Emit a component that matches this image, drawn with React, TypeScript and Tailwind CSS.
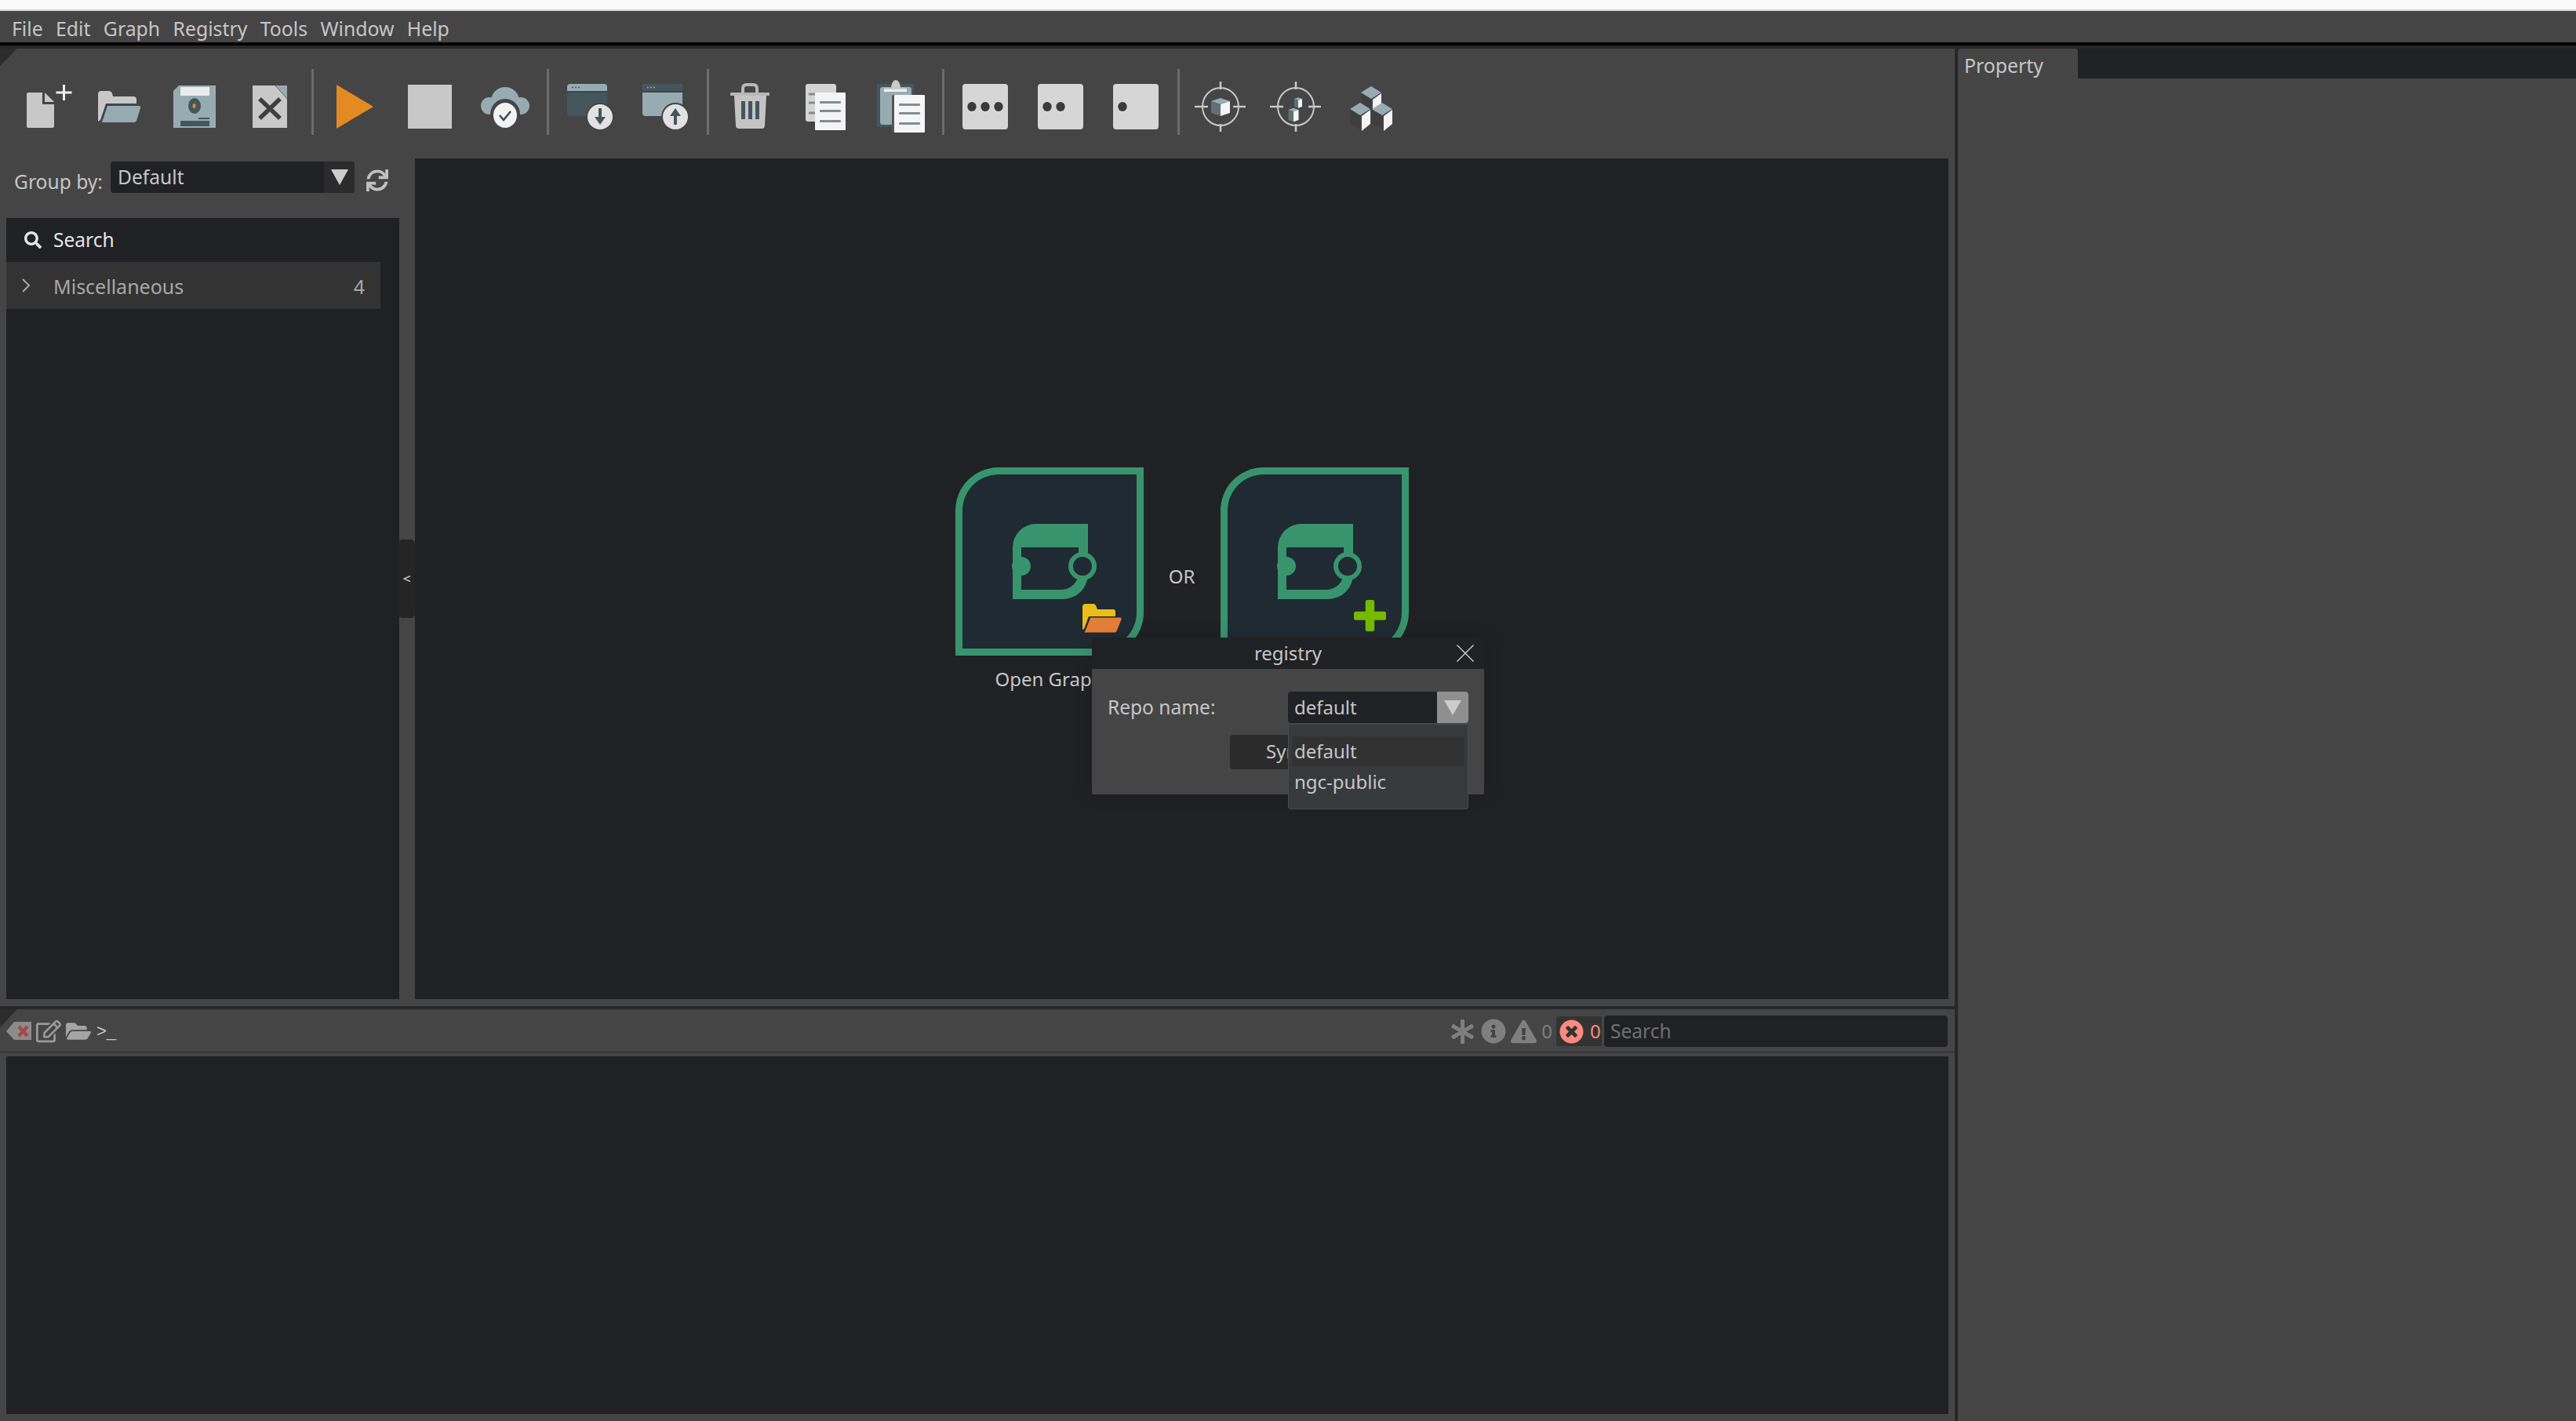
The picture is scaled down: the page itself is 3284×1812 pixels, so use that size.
import type { ReactNode } from "react";
import {
  FaAsterisk,
  FaExclamationTriangle,
  FaFolderOpen,
  FaInfoCircle,
  FaRegEdit,
  FaSearch,
  FaSync,
  FaTimesCircle,
} from "react-icons/fa";

const teal = "#97acb2";
const slate = "#44565c";
const light = "#c8c8c8";

const Cube = ({ x, y, w, h }: { x: number; y: number; w: number; h: number }) => (
  <g>
    <polygon points={`${x - w},${y} ${x},${y - w / 3} ${x + w},${y} ${x},${y + w / 3}`} fill={teal} />
    <polygon points={`${x - w},${y} ${x},${y + w / 3} ${x},${y + w / 3 + h} ${x - w},${y + h}`} fill="#5c7278" />
    <polygon points={`${x + w},${y} ${x},${y + w / 3} ${x},${y + w / 3 + h} ${x + w},${y + h}`} fill="#f4f4f4" />
  </g>
);

const Target = ({ children }: { children: ReactNode }) => (
  <>
    <ellipse cx="48" cy="48" rx="23" ry="24" fill="none" stroke={light} strokeWidth="2" />
    <path d="M15 48H32M64 48H80M48 16V26M48 70V80" stroke={light} strokeWidth="2.5" />
    {children}
  </>
);

const Block = ({ x, y }: { x: number; y: number }) => (
  <g>
    <polygon points={`${x - 13},${y} ${x},${y + 8} ${x},${y + 26} ${x - 13},${y + 18}`} fill="#3e3e3e" />
    <polygon points={`${x + 13},${y + 1} ${x + 2},${y + 9} ${x + 2},${y + 28} ${x + 13},${y + 19}`} fill="#f4f4f4" />
    <polygon points={`${x - 13},${y} ${x},${y - 8} ${x + 13},${y} ${x},${y + 8}`} fill={teal} />
  </g>
);

const Dice = ({ dots }: { dots: number[] }) => (
  <>
    <rect x="19" y="19" width="58" height="58" rx="4" fill="#d6d6d6" />
    {dots.map((cx) => (
      <ellipse key={cx} cx={cx} cy="48" rx="5.7" ry="6" fill="#3a3a3a" />
    ))}
  </>
);

const SheetLines = ({ x, ys }: { x: number; ys: number[] }) => (
  <>
    {ys.map((y) => (
      <rect key={y} x={x} y={y} width="27" height="3" rx="1" fill="#7d8f94" />
    ))}
  </>
);

const WindowBadge = ({ up }: { up: boolean }) => (
  <>
    <rect x="19" y="19" width="51" height="41" rx="4" fill={up ? teal : slate} />
    <path d="M19 28V23a4 4 0 0 1 4-4h43a4 4 0 0 1 4 4v5Z" fill={up ? slate : teal} />
    <rect x="19" y="28" width="51" height="2" fill="#3a474c" />
    <path d="M25 23.5h2M29 23.5h2M33 23.5h2" stroke={up ? teal : slate} strokeWidth="1.5" />
    <ellipse cx="61" cy="61" rx="18" ry="18" fill="#454545" />
    <ellipse cx="61" cy="61" rx="16" ry="16" fill="#e2e2e2" />
    {up ? (
      <path d="M61 50l7 10h-5v11h-4V60h-5Z" fill={slate} />
    ) : (
      <path d="M59 50h4v11h5l-7 10-7-10h5Z" fill={slate} />
    )}
  </>
);

const tools: (ReactNode | "sep")[] = [
  <>
    <path d="M28 30H46V45H61V73Q61 75 59 75H28Q26 75 26 73V32Q26 30 28 30Z" fill={light} />
    <path d="M49 30L61 42H49Z" fill={light} />
    <path d="M73.5 20V40M63.5 30H83.5" stroke="#eeeeee" strokeWidth="3" />
  </>,
  <>
    <path d="M21 32Q21 28 25 28H34Q38 28 39 31L40 35H66Q70 35 70 39V44H31L24 65L21 67Z" fill={light} />
    <path d="M33 47H73Q76 47 75 50L70 66Q69 68 67 68H26Z" fill={teal} />
  </>,
  <>
    <path d="M28 21H75V75H21V28Z" fill={teal} />
    <rect x="30" y="23" width="37" height="11" fill="#ececec" />
    <ellipse cx="48" cy="47" rx="8" ry="10" fill={slate} />
    <ellipse cx="47.5" cy="47" rx="2" ry="3" fill="#e38a22" />
    <rect x="53" y="62" width="14" height="2" fill={slate} />
    <rect x="30" y="66" width="37" height="7" fill={slate} />
  </>,
  <>
    <rect x="26" y="21" width="44" height="54" fill={light} />
    <polygon points="56,21 70,21 70,37" fill={teal} />
    <path d="M55 21L70 38" stroke="#555" strokeWidth="1" />
    <path d="M35 38L61 63M61 38L35 63" stroke="#3f3f3f" strokeWidth="5.5" />
  </>,
  "sep",
  <polygon points="25,20 72,48 25,76" fill="#e38a22" />,
  <rect x="20" y="20" width="56" height="56" fill={light} />,
  <>
    <circle cx="48" cy="41" r="18" fill={teal} />
    <circle cx="28" cy="47" r="11" fill={teal} />
    <circle cx="68" cy="47" r="11" fill={teal} />
    <rect x="28" y="44" width="40" height="14" fill={teal} />
    <ellipse cx="48" cy="58" rx="19" ry="20" fill="#454545" />
    <ellipse cx="48" cy="59" rx="15" ry="16" fill="#f2f2f2" />
    <path d="M41 59l5 6 9-11" fill="none" stroke="#3f4a4e" strokeWidth="2.5" />
  </>,
  "sep",
  <WindowBadge up={false} />,
  <WindowBadge up />,
  "sep",
  <>
    <path
      d="M39 30V25Q39 20 44 20H52Q57 20 57 25V30"
      fill="none"
      stroke="#b8b8b8"
      strokeWidth="4"
    />
    <rect x="23" y="30" width="50" height="4" rx="1" fill="#b8b8b8" />
    <path d="M28 34H69L67 72Q67 76 63 76H34Q30 76 30 72Z" fill="#c4c4c4" />
    <path d="M37 41h5v23h-5ZM46 41h5v23h-5ZM55 41h5v23h-5Z" fill={slate} />
  </>,
  <>
    <rect x="23" y="19" width="39" height="48" rx="3" fill="#d4d4d4" />
    <path d="M27 32h8M27 43h8M27 56h8" stroke="#7d8f94" strokeWidth="3" />
    <rect x="35" y="30" width="39" height="48" rx="1" fill="#f4f4f4" />
    <SheetLines x={41} ys={[41, 52, 65]} />
  </>,
  <>
    <rect x="18" y="19" width="47" height="55" fill={slate} />
    <rect x="22" y="23" width="40" height="48" rx="3" fill={teal} />
    <path d="M27 29V24H36Q37 14 42 14Q47 14 48 24H56V29Z" fill="#c9c9c9" />
    <rect x="27" y="26" width="29" height="3" fill="#eeeeee" />
    <rect x="37" y="33" width="20" height="48" rx="2" fill="#555" />
    <rect x="40" y="33" width="39" height="48" rx="1" fill="#f6f6f6" />
    <SheetLines x={46} ys={[44, 55, 68]} />
  </>,
  "sep",
  <Dice dots={[31, 48, 65]} />,
  <Dice dots={[31, 48]} />,
  <Dice dots={[31]} />,
  "sep",
  <Target>
    <Cube x={48} y={41} w={12} h={15} />
  </Target>,
  <Target>
    <Cube x={51} y={38} w={5} h={10} />
    <Cube x={45} y={52} w={6.5} h={13} />
  </Target>,
  <>
    <Block x={48} y={30} />
    <Block x={34} y={51} />
    <Block x={62} y={51} />
  </>,
];

function Logo({ badge, label }: { badge: ReactNode; label: string }) {
  return (
    <div className="flex flex-col items-center w-[240px]">
      <svg width="240" height="240" viewBox="0 0 240 240">
        <path d="M55 0H240V185A55 55 0 0 1 185 240H0V55A55 55 0 0 1 55 0Z" fill="#38946c" />
        <path d="M55 9H231V185A46 46 0 0 1 185 231H9V55A46 46 0 0 1 55 9Z" fill="#1f2a33" />
        <path d="M103 72H169V136A32 32 0 0 1 137 168H73V102A30 30 0 0 1 103 72Z" fill="#38946c" />
        <path d="M84 102H157V134A22 22 0 0 1 135 156H84Z" fill="#1f2a33" />
        <circle cx="84" cy="126" r="12" fill="#38946c" />
        <circle cx="162" cy="126" r="15" fill="#1f2a33" stroke="#38946c" strokeWidth="6" />
        {badge}
      </svg>
      <span className="mt-[14px] text-[24px] leading-[32px] whitespace-nowrap">{label}</span>
    </div>
  );
}

const FolderBadge = (
  <>
    <path d="M162 178Q162 174 166 174H176Q178 174 179 176L181 181H201Q204 181 204 184V190H170L164 206L162 207Z" fill="#ecbc19" />
    <path d="M172 191H210Q213 191 212 194L206 209Q205 211 203 211H164Z" fill="#e47f3b" stroke="#1f2a33" strokeWidth="1" />
  </>
);

const PlusBadge = (
  <>
    <rect x="184.7" y="169" width="11.5" height="40" rx="2.5" fill="#76b900" />
    <rect x="170" y="183.7" width="41" height="11" rx="2.5" fill="#76b900" />
  </>
);

function RegistryDialog() {
  return (
    <div className="absolute left-[863px] top-[611px] w-[500px] h-[200px] bg-[#454545] rounded-b-[2px] shadow-[0_0_24px_rgba(0,0,0,0.12)]">
      <div className="relative h-[40px] bg-[#202124] flex items-center justify-center">
        <span className="text-[24px] leading-[32px]">registry</span>
        <svg className="absolute right-[13px] top-[9px]" width="22" height="22" viewBox="0 0 22 22">
          <path d="M0.5 0.5L21.5 21.5M21.5 0.5L0.5 21.5" stroke="#d8d8d8" strokeWidth="1.3" />
        </svg>
      </div>
      <div className="flex items-center pl-[20px] pr-[20px] pt-[28px]">
        <span className="w-[230px] text-[24.5px] leading-[42px]">Repo name:</span>
        <div className="relative flex w-[230px] h-[40px] rounded-[4px] overflow-visible bg-[#202124]">
          <span className="flex-1 pl-[8px] text-[24px] leading-[40px]">default</span>
          <div className="flex w-[40px] items-center justify-center rounded-r-[4px] bg-[#8f8f8f]">
            <div className="w-0 h-0 border-l-[11px] border-r-[11px] border-t-[19px] border-l-transparent border-r-transparent border-t-[#cccccc]" />
          </div>
          <div className="absolute z-10 left-0 top-[41px] w-[230px] h-[109px] rounded-[3px] bg-[#363a3d] border border-[#484b4e] px-[4px] pt-[15px]">
            <div className="h-[38px] bg-[#323232] pl-[3px] text-[24px] leading-[37px]">default</div>
            <div className="h-[38px] pl-[3px] text-[24px] leading-[39px]">ngc-public</div>
          </div>
        </div>
      </div>
      <div className="flex pl-[176px] pt-[14px]">
        <div className="w-[144px] h-[44px] rounded-[4px] bg-[#2b2b2b] text-center text-[24px] leading-[42px]">Sync</div>
      </div>
    </div>
  );
}

function Toolbar() {
  return (
    <div className="relative flex h-[140px] items-start pl-[8px] pt-[26px]">
      <div className="absolute left-0 top-0 w-[22px] h-[22px] bg-[#2c2c2c] [clip-path:polygon(0_0,100%_0,0_100%)]" />
      {tools.map((tool, i) =>
        tool === "sep" ? (
          <div key={i} className="flex w-[12px] h-[84px] justify-center">
            <div className="w-[3px] h-full bg-[#6c6c6c]" />
          </div>
        ) : (
          <svg key={i} className="shrink-0" width="96" height="96" viewBox="0 0 96 96">
            {tool}
          </svg>
        ),
      )}
    </div>
  );
}

function StagePane() {
  return (
    <div className="flex w-[509px] flex-col">
      <div className="flex h-[76px] pl-[18px] pt-[4px]">
        <span className="w-[123px] pt-[10px] text-[24.6px] leading-[32px]">Group by:</span>
        <div className="flex h-[40px] w-[311px] rounded-[4px] bg-[#202124] overflow-hidden">
          <span className="flex-1 pl-[9px] text-[24.6px] leading-[40px]">Default</span>
          <div className="flex w-[39px] justify-center pt-[10px] bg-[#2b2b2b]">
            <div className="w-0 h-0 border-l-[11px] border-r-[11px] border-t-[20px] border-l-transparent border-r-transparent border-t-[#cccccc]" />
          </div>
        </div>
        <FaSync className="ml-[15px] mt-[10px] text-[#c0c0c0]" size={28} />
      </div>
      <div className="ml-[8px] flex-1 bg-[#202124]">
        <div className="flex h-[56px] items-center pl-[23px] text-[#e6e6e6]">
          <FaSearch size={22} />
          <span className="ml-[15px] text-[24.5px] leading-[30px]">Search</span>
        </div>
        <div className="flex h-[60px] w-[477px] items-center bg-[#333333] pl-[19px] pr-[20px] text-[#a8a8a8]">
          <svg width="12" height="18" viewBox="0 0 12 18">
            <path d="M2 1L10 9L2 17" fill="none" stroke="#a8a8a8" strokeWidth="2" />
          </svg>
          <span className="ml-[29px] flex-1 pt-[2px] text-[25px] leading-[32px]">Miscellaneous</span>
          <span className="pt-[2px] text-[25px] leading-[32px]">4</span>
        </div>
      </div>
    </div>
  );
}

function Canvas() {
  return (
    <div className="relative flex w-[1955px] items-center justify-center bg-[#202124] pt-[2px]">
      <Logo badge={FolderBadge} label="Open Graph" />
      <div className="flex w-[98px] justify-center pb-[8px] text-[24px] leading-[32px]">OR</div>
      <Logo badge={PlusBadge} label="New Graph" />
      <RegistryDialog />
    </div>
  );
}

function LogBar() {
  return (
    <div className="relative flex h-[54px] items-center pl-[8px] pr-[9px] pt-[2px]">
      <div className="absolute left-0 top-0 w-[22px] h-[23px] bg-[#2c2c2c] [clip-path:polygon(0_0,100%_0,0_100%)]" />
      <svg width="32" height="24" viewBox="0 0 32 24">
        <path d="M10 0H32V23H10L0 12Z" fill="#8c8c8c" />
        <path d="M16 6L27 18M27 6L16 18" stroke="#a3484b" strokeWidth="4.5" />
      </svg>
      <FaRegEdit className="ml-[6px] text-[#9a9a9a]" size={32} />
      <FaFolderOpen className="ml-[6px] text-[#a4a4a4]" size={32} />
      <span className="ml-[7px] text-[22px] leading-[32px] font-['Liberation_Sans',sans-serif]">&gt;_</span>
      <div className="flex-1" />
      <FaAsterisk className="text-[#7f7f7f]" size={31} />
      <FaInfoCircle className="ml-[8px] text-[#7f7f7f]" size={32} />
      <FaExclamationTriangle className="ml-[6px] text-[#7f7f7f]" size={33} />
      <span className="w-[24px] pl-[2px] text-center text-[#7f7f7f] text-[24px] leading-[32px]">0</span>
      <div className="flex h-[38px] w-[58px] items-center gap-[8px] bg-[#333333] ml-[1px] pl-[4px]">
        <FaTimesCircle className="text-[#f98a7e]" size={31} />
        <span className="text-[#f98a7e] text-[24px] leading-[32px]">0</span>
      </div>
      <div className="ml-[3px] h-[40px] w-[438px] rounded-[4px] bg-[#202124] pl-[8px] text-[24.5px] leading-[40px] text-[#707070]">
        Search
      </div>
    </div>
  );
}

export default function App() {
  return (
    <div className="flex h-[1812px] w-[3284px] flex-col overflow-hidden bg-[#454545] font-['Noto_Sans','Open_Sans',sans-serif] text-[#c6c6c6]">
      <div className="h-[12px] bg-[#fafafa]" />
      <div className="h-[2px] bg-[#d4d4d4]" />
      <div className="flex h-[40px] items-center gap-[16.4px] pl-[15px] pt-[4px] text-[24.8px] leading-[32px]">
        {["File", "Edit", "Graph", "Registry", "Tools", "Window", "Help"].map((m) => (
          <span key={m}>{m}</span>
        ))}
      </div>
      <div className="h-[4px] bg-black" />
      <div className="h-[4px] bg-[#2a2826]" />
      <div className="flex flex-1">
        <div className="flex w-[2492px] flex-col">
          <div className="flex h-[1221px] flex-col">
            <Toolbar />
            <div className="flex h-[1072px]">
              <StagePane />
              <div className="flex w-[20px] items-center">
                <div className="flex h-[100px] w-[21px] -ml-[1px] items-center justify-center rounded-[5px] bg-[#252525]">
                  <svg width="10" height="8" viewBox="0 0 10 8">
                    <path d="M9 0.5L1 4L9 7.5" fill="none" stroke="#c8c8c8" strokeWidth="1.4" />
                  </svg>
                </div>
              </div>
              <Canvas />
            </div>
          </div>
          <div className="h-[4px] bg-[#26272a]" />
          <LogBar />
          <div className="h-[1px] bg-[#2a2a2a]" />
          <div className="h-[5px]" />
          <div className="mx-[8px] h-[456px] bg-[#202124]" />
        </div>
        <div className="w-[4px] bg-[#26272a]" />
        <div className="flex flex-1 flex-col">
          <div className="flex h-[38px] bg-[#202124]">
            <div className="h-full w-[153px] rounded-t-[4px] bg-[#454545] pl-[8px] text-[24.8px] leading-[42px]">Property</div>
          </div>
        </div>
      </div>
    </div>
  );
}
